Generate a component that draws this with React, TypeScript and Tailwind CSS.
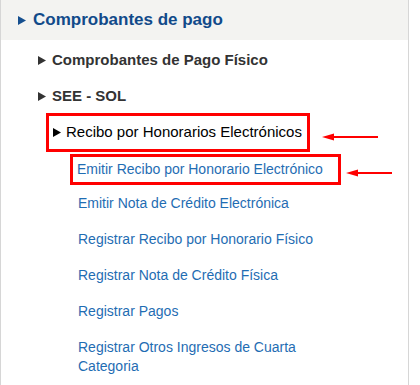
const links = [
  'Emitir Nota de Crédito Electrónica',
  'Registrar Recibo por Honorario Físico',
  'Registrar Nota de Crédito Física',
  'Registrar Pagos',
  'Registrar Otros Ingresos de Cuarta Categoria',
]

function Arrow({ width }: { width: number }) {
  return (
    <svg width={width} height="10" viewBox={`0 0 ${width} 10`} className="shrink-0">
      <line x1="8" y1="5" x2={width} y2="5" stroke="#ff0000" strokeWidth="2" />
      <polygon points="0,5 12,1.5 12,8.5" fill="#ff0000" />
    </svg>
  )
}

function Caret({ color }: { color: string }) {
  return (
    <svg width="8" height="9" viewBox="0 0 8 9" className="shrink-0">
      <polygon points="0,0 8,4.5 0,9" fill={color} />
    </svg>
  )
}

export default function App() {
  return (
    <div className="w-[420px] h-[385px] bg-white font-['Liberation_Sans',Arial,sans-serif] overflow-hidden">
      <div className="w-[409px] h-full border-l border-r border-[#d6d6d6]">
        <div className="h-10 bg-[#f3f3f1] flex items-center gap-[7px] pl-[17px]">
          <Caret color="#154f8f" />
          <span className="text-[17px] font-bold text-[#114a8a]">Comprobantes de pago</span>
        </div>

        <div className="pl-[37px] pt-[10px]">
          <div className="h-[20px] flex items-center gap-[6px] text-[15px] font-bold text-[#333]">
            <Caret color="#333" />
            <span>Comprobantes de Pago Físico</span>
          </div>
          <div className="h-[20px] mt-[16px] flex items-center gap-[6px] text-[15px] font-bold text-[#333]">
            <Caret color="#333" />
            <span>SEE - SOL</span>
          </div>

          <div className="mt-[7px] flex items-center">
            <div className="ml-[8px] h-[39px] border-[3px] border-[#ff0000] flex items-center gap-[5px] pl-[4px] pr-[5px] whitespace-nowrap">
              <Caret color="#000" />
              <span className="text-[15px] text-black">Recibo por Honorarios Electrónicos</span>
            </div>
            <div className="ml-[12px] mt-[8px]">
              <Arrow width={56} />
            </div>
          </div>

          <div className="mt-[2px] flex items-center">
            <div className="ml-[32px] h-[31px] border-[3px] border-[#ff0000] flex items-center pl-[4px] pr-[15px] whitespace-nowrap">
              <span className="text-[14px] text-[#1f6db3]">Emitir Recibo por Honorario Electrónico</span>
            </div>
            <div className="ml-[5px] mt-[6px]">
              <Arrow width={46} />
            </div>
          </div>

          <ul className="pl-[40px] pt-[9px] flex flex-col gap-[17px]">
            {links.map(l => (
              <li key={l} className="w-[250px] text-[14px] leading-[19px] text-[#1f6db3]">
                {l}
              </li>
            ))}
          </ul>
        </div>
      </div>
    </div>
  )
}
